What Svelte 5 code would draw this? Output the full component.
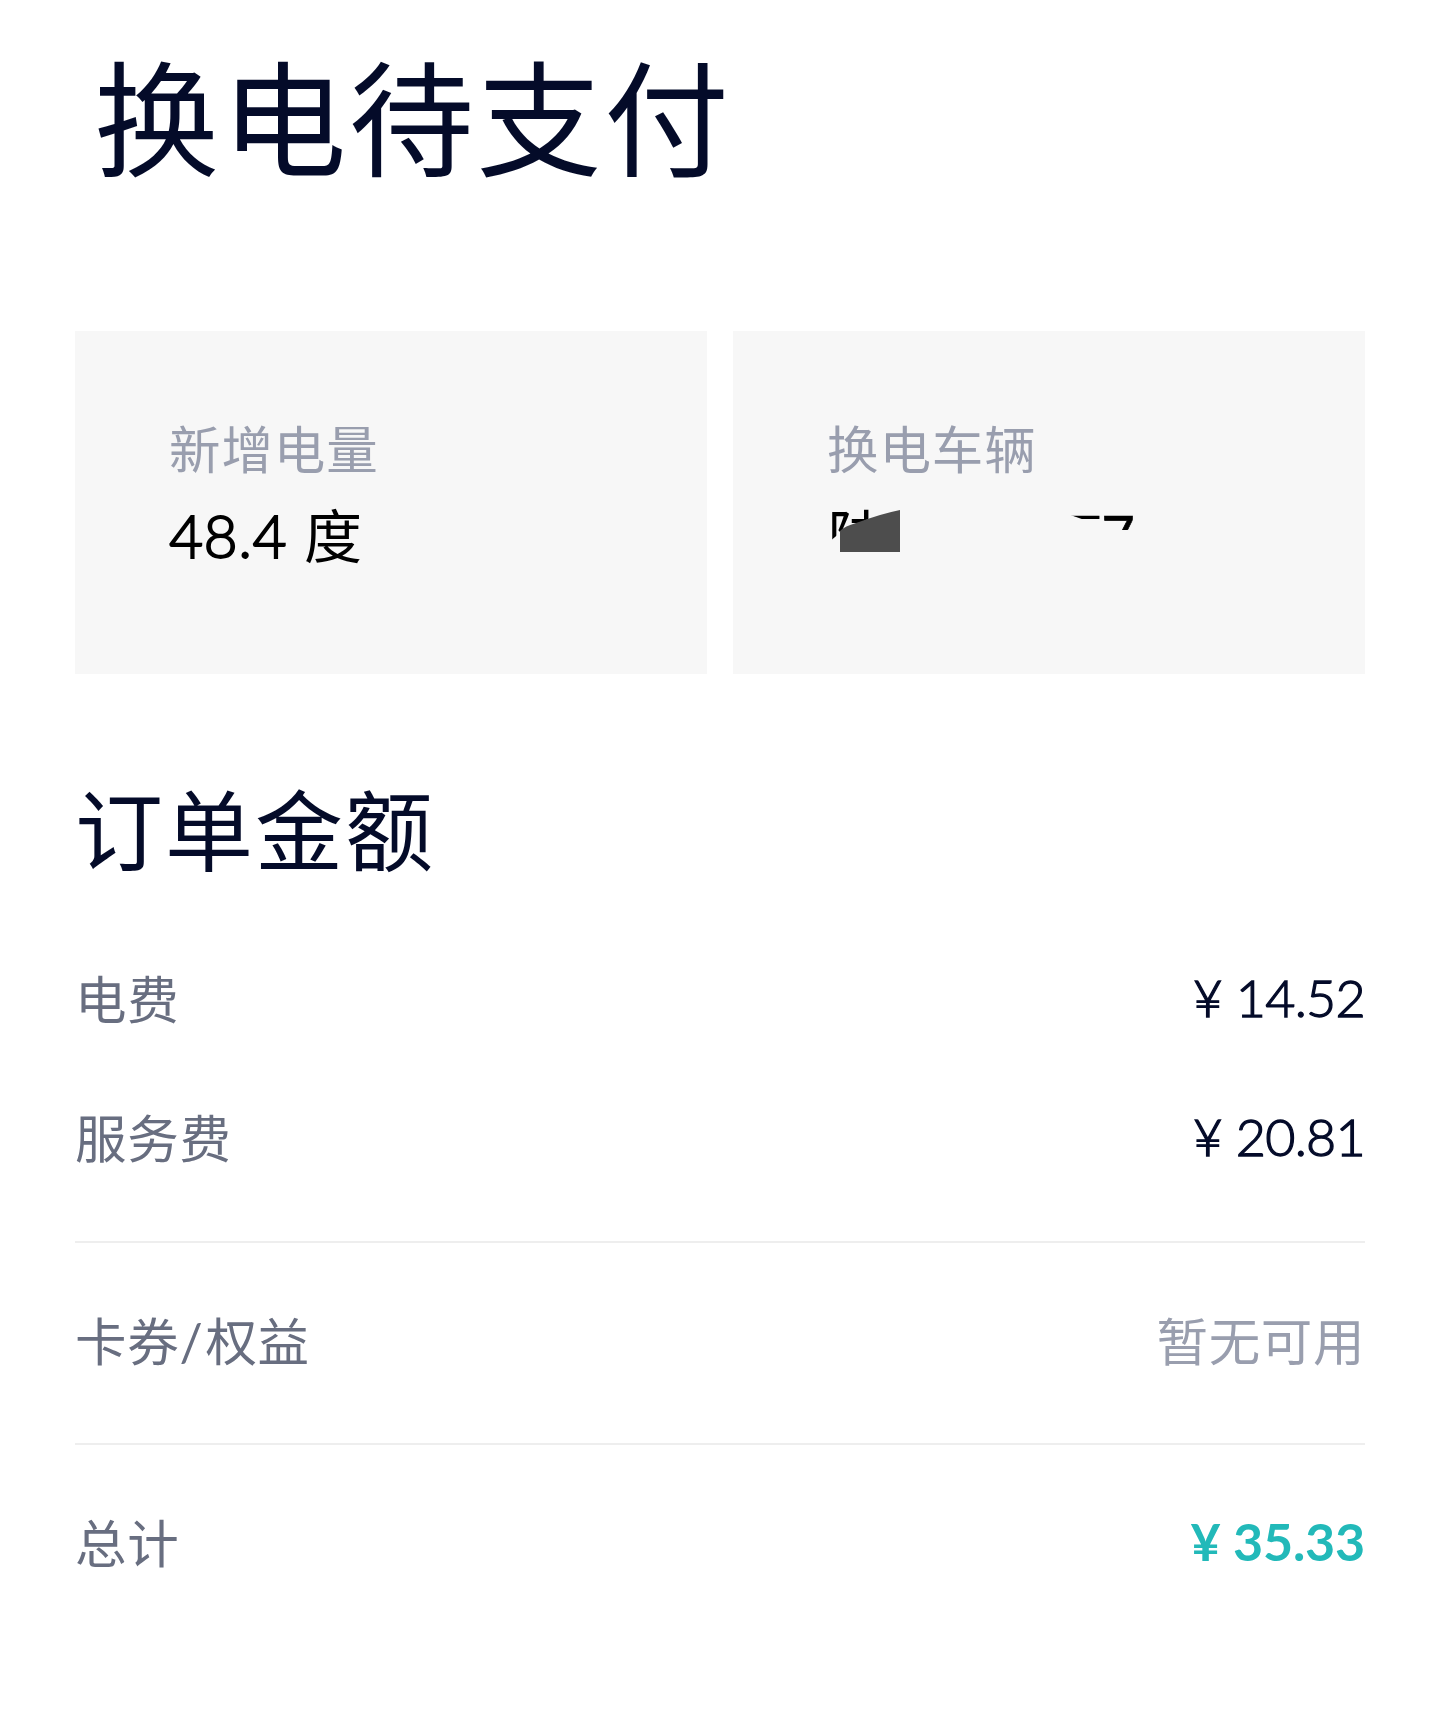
<script>
  const fees = [
    { label: '电费', amount: '14.52' },
    { label: '服务费', amount: '20.81' }
  ]
  const total = '35.33'
</script>

<main class="page">
  <h1>换电待支付</h1>

  <div class="cards">
    <div class="card">
      <div class="card-label">新增电量</div>
      <div class="card-value"><span class="number">48.4</span> 度</div>
    </div>
    <div class="card">
      <div class="card-label">换电车辆</div>
      <div class="card-value plate">
        <span class="plate-head">陕</span>
        <span class="plate-tail">77</span>
        <svg class="shade" viewBox="0 0 60 42" aria-hidden="true">
          <path d="M0 21 Q5 16 16 13 Q44 3 60 0 V42 H0 Z" />
        </svg>
      </div>
    </div>
  </div>

  <h2>订单金额</h2>

  <div class="fees">
    {#each fees as fee}
      <div class="row">
        <span class="label">{fee.label}</span>
        <span class="amount">¥ {fee.amount}</span>
      </div>
    {/each}
  </div>

  <div class="row line">
    <span class="label">卡券<span class="slash">/</span>权益</span>
    <span class="none">暂无可用</span>
  </div>

  <div class="row line">
    <span class="label">总计</span>
    <span class="amount total">¥ {total}</span>
  </div>
</main>

<style>
  :global(body) { background: #fff; }
  .page { box-sizing: border-box; height: 1731px; padding: 39px 75px 0; font-family: Lato, 'Noto Sans CJK SC', sans-serif; color: #040b29; }
  h1 { margin: 0 0 0 19px; font-size: 125px; line-height: 160px; font-weight: 400; letter-spacing: 2.5px; }
  .cards { display: flex; gap: 26px; margin-top: 132px; }
  .card { box-sizing: border-box; flex: 1; height: 343px; padding: 85px 94px 0; background: #f7f7f7; }
  .card-label { font-size: 51.5px; line-height: 66px; letter-spacing: 0.9px; color: #999eae; }
  .card-value { margin-top: 18px; font-size: 58px; line-height: 72px; color: #000; }
  .number { margin-right: 2px; font-size: 59px; font-weight: 300; letter-spacing: 0.4px; -webkit-text-stroke: 1.8px; }
  .plate { position: relative; display: flex; justify-content: space-between; width: 308px; height: 72px; }
  /* only the top edge of the plate number stays readable */
  .plate-head { margin: 1px 0 0 1px; clip-path: polygon(0 0, 100% 0, 58px 10px, 14px 30px, 0 42px); }
  .plate-tail { -webkit-text-stroke: 0.6px; clip-path: polygon(0 0, 100% 0, 100% 30px, 50% 30px, 50% 19px, 14px 19px, 0 14px); }
  .shade { position: absolute; left: 13px; top: 10px; width: 60px; height: 42px; fill: #4d4d4d; }
  h2 { margin: 96px 0 0; font-size: 88px; line-height: 120px; font-weight: 400; letter-spacing: 2px; }
  .fees { padding: 37px 0 36px; }
  .row { display: flex; justify-content: space-between; align-items: center; height: 139px; }
  .line { box-sizing: border-box; height: 202px; padding-bottom: 10px; border-top: 2px solid #eee; }
  .label { font-size: 51.5px; letter-spacing: 0.7px; color: #686e80; }
  .slash { margin-right: 2px; }
  .none { font-size: 51.5px; letter-spacing: 0.6px; color: #999eae; }
  .amount { font-size: 52px; font-weight: 300; letter-spacing: -0.7px; -webkit-text-stroke: 1.3px; }
  .total { font-weight: 700; letter-spacing: -0.2px; color: #22b9b9; -webkit-text-stroke: 0; }
  .line .total { padding-top: 2px; }
</style>
